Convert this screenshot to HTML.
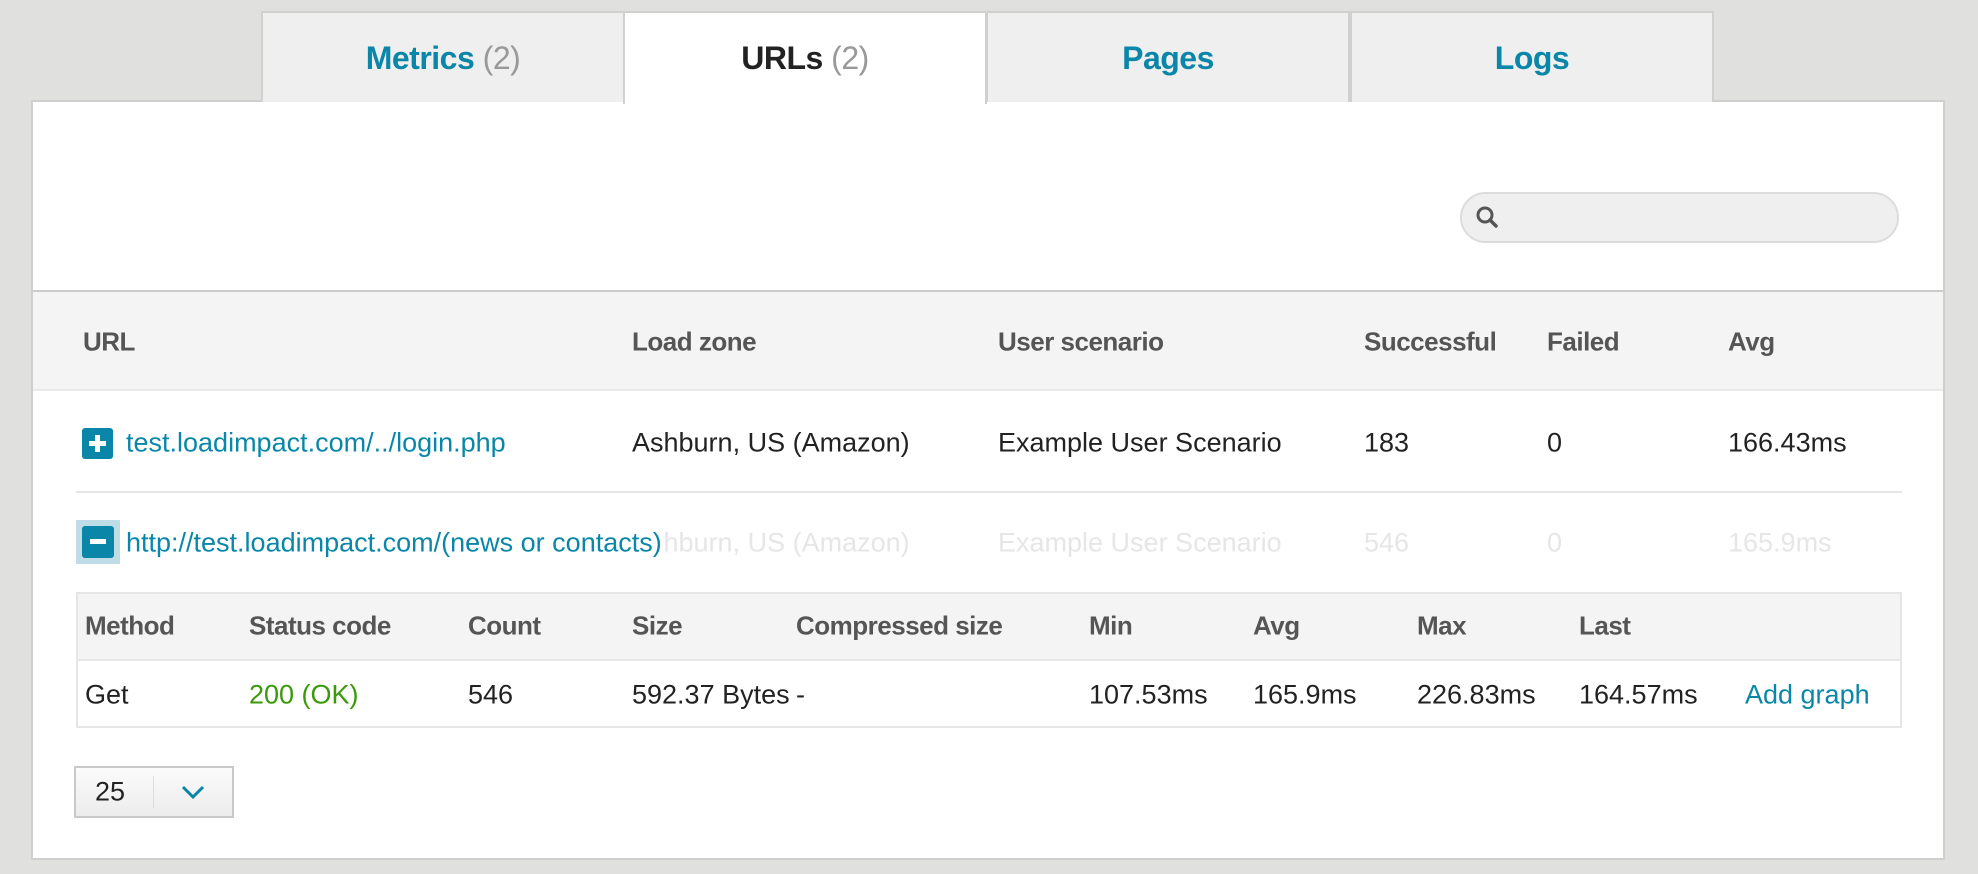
<!DOCTYPE html>
<html><head><meta charset="utf-8"><style>
*{margin:0;padding:0;box-sizing:border-box}
body{width:1978px;height:874px;background:#e0e0df;font-family:"Liberation Sans",sans-serif;position:relative;overflow:hidden}
.a{position:absolute;white-space:nowrap}
.tab{position:absolute;top:11px;height:91px;width:364px;background:#efefef;border:2px solid #d0d0d0;border-bottom:none;text-align:center;line-height:90px;font-size:32px;font-weight:bold;color:#0a87a8;letter-spacing:-0.5px}
.tab span{color:#999;font-weight:normal}
.panel{position:absolute;left:31px;top:100px;width:1914px;height:760px;background:#fff;border:2px solid #cfcfcf}
.h{font-size:26px;font-weight:bold;color:#555;letter-spacing:-0.5px;transform:translateY(-50%)}
.t{font-size:27px;color:#222;transform:translateY(-50%)}
.f{color:#e6e6e6}
.l{color:#0a87a8}
</style></head><body>
<div class="panel"></div>
<div class="tab" style="left:261px">Metrics <span>(2)</span></div>
<div class="tab" style="left:623px;background:#fff;height:93px;color:#222;z-index:2">URLs <span>(2)</span></div>
<div class="tab" style="left:986px">Pages</div>
<div class="tab" style="left:1350px">Logs</div>
<div style="position:absolute;left:625px;top:100px;width:360px;height:4px;background:#fff;z-index:3"></div>

<div class="a" style="left:1460px;top:192px;width:439px;height:51px;border-radius:26px;background:#efefef;border:2px solid #dcdcdc"></div>
<svg class="a" style="left:1474px;top:204px" width="26" height="26" viewBox="0 0 26 26"><circle cx="11" cy="11" r="7" fill="none" stroke="#555" stroke-width="3"/><line x1="16" y1="16" x2="22" y2="22" stroke="#555" stroke-width="3.5" stroke-linecap="round"/></svg>

<div class="a" style="left:33px;top:290px;width:1910px;height:101px;background:#f4f4f4;border-top:2px solid #cccccc;border-bottom:2px solid #e8e8e8"></div>
<div class="a h" style="left:83px;top:342px">URL</div>
<div class="a h" style="left:632px;top:342px">Load zone</div>
<div class="a h" style="left:998px;top:342px">User scenario</div>
<div class="a h" style="left:1364px;top:342px">Successful</div>
<div class="a h" style="left:1547px;top:342px">Failed</div>
<div class="a h" style="left:1728px;top:342px">Avg</div>

<div class="a" style="left:82px;top:428px;width:31px;height:31px;background:#0a87a8;border-radius:3px"></div>
<div class="a" style="left:89px;top:441px;width:17px;height:5px;background:#fff"></div>
<div class="a" style="left:95px;top:435px;width:5px;height:17px;background:#fff"></div>
<div class="a t l" style="left:126px;top:443px">test.loadimpact.com/../login.php</div>
<div class="a t" style="left:632px;top:443px">Ashburn, US (Amazon)</div>
<div class="a t" style="left:998px;top:443px">Example User Scenario</div>
<div class="a t" style="left:1364px;top:443px">183</div>
<div class="a t" style="left:1547px;top:443px">0</div>
<div class="a t" style="left:1728px;top:443px">166.43ms</div>
<div class="a" style="left:76px;top:491px;width:1826px;height:2px;background:#e6e6e6"></div>

<div class="a t f" style="left:632px;top:543px">Ashburn, US (Amazon)</div>
<div class="a t f" style="left:998px;top:543px">Example User Scenario</div>
<div class="a t f" style="left:1364px;top:543px">546</div>
<div class="a t f" style="left:1547px;top:543px">0</div>
<div class="a t f" style="left:1728px;top:543px">165.9ms</div>
<div class="a" style="left:76px;top:520px;width:44px;height:44px;background:#bfdde6"></div>
<div class="a" style="left:82px;top:526px;width:32px;height:32px;background:#0a87a8;border-radius:3px"></div>
<div class="a" style="left:90px;top:539px;width:16px;height:5px;background:#fff"></div>
<div class="a t l" style="left:126px;top:543px;background:#fff">http://test.loadimpact.com/(news or contacts)</div>

<div class="a" style="left:76px;top:592px;width:1826px;height:136px;border:2px solid #e6e6e6;background:#fff"></div>
<div class="a" style="left:78px;top:594px;width:1822px;height:67px;background:#f4f4f4;border-bottom:2px solid #e6e6e6"></div>
<div class="a h" style="left:85px;top:626px">Method</div>
<div class="a h" style="left:249px;top:626px">Status code</div>
<div class="a h" style="left:468px;top:626px">Count</div>
<div class="a h" style="left:632px;top:626px">Size</div>
<div class="a h" style="left:796px;top:626px">Compressed size</div>
<div class="a h" style="left:1089px;top:626px">Min</div>
<div class="a h" style="left:1253px;top:626px">Avg</div>
<div class="a h" style="left:1417px;top:626px">Max</div>
<div class="a h" style="left:1579px;top:626px">Last</div>
<div class="a t" style="left:85px;top:695px">Get</div>
<div class="a t" style="left:249px;top:695px;color:#3a9a0a">200 (OK)</div>
<div class="a t" style="left:468px;top:695px">546</div>
<div class="a t" style="left:632px;top:695px">592.37 Bytes</div>
<div class="a t" style="left:796px;top:695px">-</div>
<div class="a t" style="left:1089px;top:695px">107.53ms</div>
<div class="a t" style="left:1253px;top:695px">165.9ms</div>
<div class="a t" style="left:1417px;top:695px">226.83ms</div>
<div class="a t" style="left:1579px;top:695px">164.57ms</div>
<div class="a t l" style="left:1745px;top:695px">Add graph</div>

<div class="a" style="left:74px;top:766px;width:160px;height:52px;border:2px solid #c8c8c8;background:linear-gradient(#fbfbfb,#ececec)"></div>
<div class="a t" style="left:95px;top:792px">25</div>
<div class="a" style="left:153px;top:776px;width:1px;height:32px;background:#ddd"></div>
<svg class="a" style="left:180px;top:783px" width="26" height="18" viewBox="0 0 26 18"><path d="M3 4 L13 14 L23 4" fill="none" stroke="#0a87a8" stroke-width="3"/></svg>
</body></html>
